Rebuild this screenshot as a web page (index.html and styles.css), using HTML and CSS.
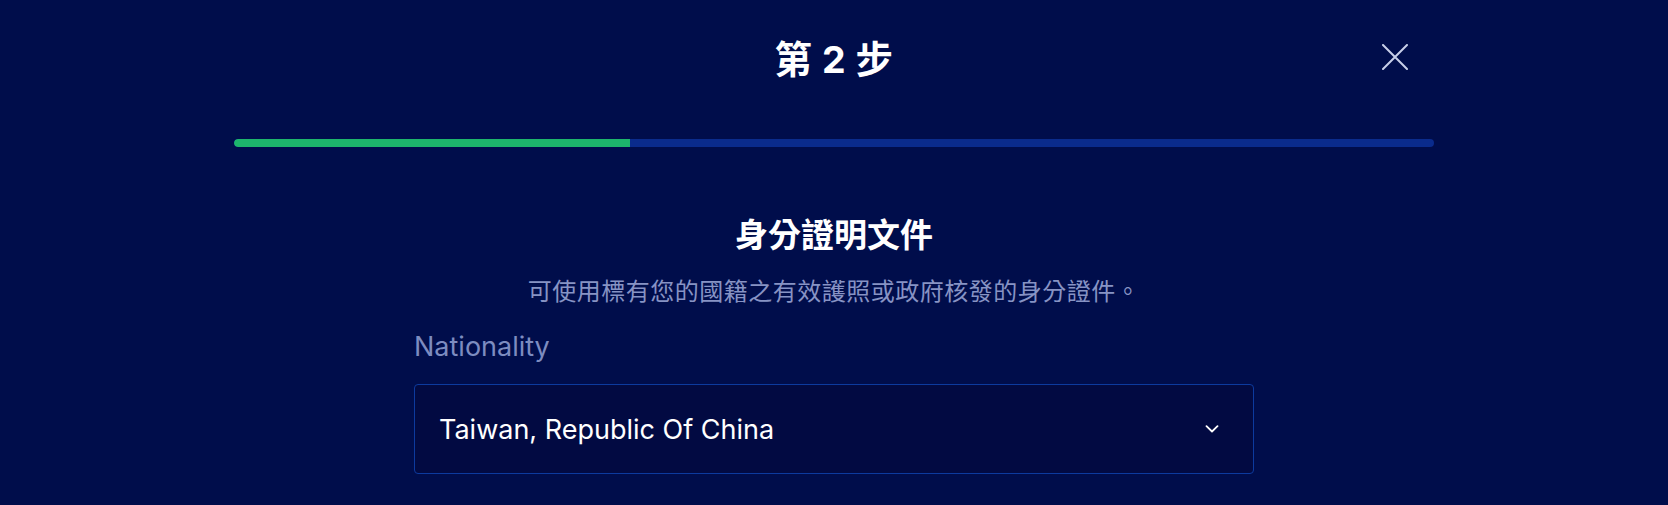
FILE: index.html
```html
<!DOCTYPE html>
<html lang="zh-Hant">
<head>
<meta charset="utf-8">
<title>第 2 步</title>
<link rel="stylesheet" href="styles.css">
</head>
<body>
<div class="page">
  <header class="header">
    <h1 class="step-title">第 2 步</h1>
    <button class="close-btn" aria-label="關閉">
      <svg width="26" height="26" viewBox="0 0 26 26"><path d="M1 1L25 25M25 1L1 25" stroke="#c7cfe9" stroke-width="2" stroke-linecap="round" fill="none"/></svg>
    </button>
  </header>
  <div class="progress"><div class="progress-fill" style="width:33%"></div></div>
  <section class="form">
    <h2 class="section-title">身分證明文件</h2>
    <p class="section-desc">可使用標有您的國籍之有效護照或政府核發的身分證件。</p>
    <label class="field-label">Nationality</label>
    <div class="select">
      <span class="select-value">Taiwan, Republic Of China</span>
      <svg class="chevron" width="14" height="8" viewBox="0 0 14 8"><path d="M1.5 1.2L7 6.5L12.5 1.2" stroke="#ffffff" stroke-width="1.8" fill="none" stroke-linecap="round" stroke-linejoin="round"/></svg>
    </div>
  </section>
</div>
</body>
</html>
```

FILE: styles.css
```css
html, body {
  margin: 0;
  padding: 0;
  background: #000d4b;
  height: 100%;
}
body {
  font-family: Inter, "Noto Sans CJK TC", "Noto Sans", sans-serif;
  color: #ffffff;
  overflow: hidden;
}
.page {
  width: 1200px;
  margin: 0 auto;
}
.header {
  position: relative;
  height: 116px;
  box-sizing: border-box;
  padding-top: 4px;
  display: flex;
  align-items: center;
  justify-content: center;
}
.step-title {
  margin: 0;
  font-size: 37.5px;
  line-height: 44px;
  font-weight: 700;
  letter-spacing: 0.5px;
}
.close-btn {
  position: absolute;
  right: 26px;
  top: 44px;
  width: 26px;
  height: 26px;
  padding: 0;
  border: 0;
  background: none;
  display: flex;
}
.progress {
  margin-top: 23px;
  height: 8px;
  border-radius: 4px;
  background: #0a2b8c;
  overflow: hidden;
}
.progress-fill {
  height: 100%;
  background: #1db56c;
  border-radius: 4px 0 0 4px;
}
.form {
  width: 840px;
  margin: 0 auto;
  display: flex;
  flex-direction: column;
}
.section-title {
  margin: 68px 0 0;
  text-align: center;
  font-size: 33px;
  line-height: 40px;
  font-weight: 700;
}
.section-desc {
  margin: 21px 0 0;
  text-align: center;
  font-size: 24px;
  line-height: 32px;
  letter-spacing: 0.5px;
  color: #8793c4;
}
.field-label {
  margin-top: 21px;
  font-size: 27px;
  line-height: 36px;
  color: #7d8cc0;
}
.select {
  margin-top: 19px;
  height: 90px;
  box-sizing: border-box;
  border: 1.5px solid #0c3a9e;
  border-radius: 4px;
  background: #020a42;
  display: flex;
  align-items: center;
  justify-content: space-between;
  padding: 0 34px 0 24px;
}
.select-value {
  font-size: 27px;
  color: #ffffff;
}
.chevron {
  display: block;
}
```
